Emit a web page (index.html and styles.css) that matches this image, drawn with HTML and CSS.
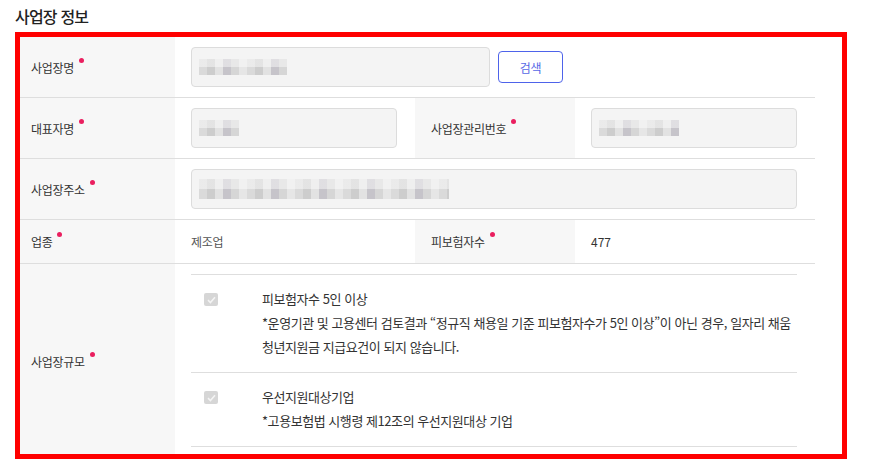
FILE: index.html
```html
<!DOCTYPE html>
<html lang="ko">
<head>
    <meta charset="UTF-8">
    <title>사업장 정보</title>
    <link rel="stylesheet" href="styles.css">
</head>
<body>
    <h2 class="section-title">사업장 정보</h2>

    <div class="highlight-box">
        <div class="info-table">
            <!-- 사업장명 -->
            <div class="cell label"><span class="required">사업장명</span></div>
            <div class="cell value span-3">
                <div class="field field-name"><span class="masked masked-name"></span></div>
                <button class="btn-search">검색</button>
            </div>

            <!-- 대표자명 / 사업장관리번호 -->
            <div class="cell label"><span class="required">대표자명</span></div>
            <div class="cell value">
                <div class="field"><span class="masked masked-rep"></span></div>
            </div>
            <div class="cell label label-inner"><span class="required">사업장관리번호</span></div>
            <div class="cell value">
                <div class="field"><span class="masked masked-no"></span></div>
            </div>

            <!-- 사업장주소 -->
            <div class="cell label"><span class="required">사업장주소</span></div>
            <div class="cell value span-3">
                <div class="field"><span class="masked masked-addr"></span></div>
            </div>

            <!-- 업종 / 피보험자수 -->
            <div class="cell label short"><span class="required">업종</span></div>
            <div class="cell value short"><span class="text-muted">제조업</span></div>
            <div class="cell label label-inner short"><span class="required">피보험자수</span></div>
            <div class="cell value short"><span class="text-plain">477</span></div>

            <!-- 사업장규모 -->
            <div class="cell label tall"><span class="required">사업장규모</span></div>
            <div class="cell value span-3 tall scale-cell">
                <div class="scale-list">
                    <div class="scale-item">
                        <span class="check-box">
                            <svg width="9" height="8" viewBox="0 0 9 8"><path d="M1 4.2 L3.4 6.5 L8 1.2" fill="none" stroke="#f4f4f4" stroke-width="1.6"/></svg>
                        </span>
                        <div class="scale-text">
                            <p class="scale-title">피보험자수 5인 이상</p>
                            <p class="scale-desc">*운영기관 및 고용센터 검토결과 “정규직 채용일 기준 피보험자수가 5인 이상”이 아닌 경우, 일자리 채움 청년지원금 지급요건이 되지 않습니다.</p>
                        </div>
                    </div>
                    <div class="scale-item">
                        <span class="check-box">
                            <svg width="9" height="8" viewBox="0 0 9 8"><path d="M1 4.2 L3.4 6.5 L8 1.2" fill="none" stroke="#f4f4f4" stroke-width="1.6"/></svg>
                        </span>
                        <div class="scale-text">
                            <p class="scale-title">우선지원대상기업</p>
                            <p class="scale-desc">*고용보험법 시행령 제12조의 우선지원대상 기업</p>
                        </div>
                    </div>
                </div>
            </div>
        </div>
    </div>
</body>
</html>
```

FILE: styles.css
```css
* {
    margin: 0;
    padding: 0;
    box-sizing: border-box;
}

body {
    font-family: "Noto Sans CJK KR", "Noto Sans", sans-serif;
    background: white;
    color: #333;
    font-size: 12px;
    padding-left: 15px;
}

.section-title {
    font-size: 16px;
    font-weight: 500;
    line-height: 32px;
    color: #222;
    letter-spacing: -0.8px;
}

.highlight-box {
    width: 832px;
    height: 427px;
    border: 5px solid #ff0000;
    overflow: hidden;
}

.info-table {
    display: grid;
    grid-template-columns: 155px 240px 160px 240px;
    width: 795px;
}

.cell {
    height: 61px;
    border-bottom: 1px solid #dedede;
    display: flex;
    align-items: center;
}

.cell.short {
    height: 44px;
}

.cell.tall {
    height: auto;
}

.span-3 {
    grid-column: span 3;
}

.label {
    background: #f7f7f7;
    padding-left: 11px;
}

.label-inner {
    padding-left: 16px;
}

.value {
    padding: 0 18px 0 16px;
}

.required {
    position: relative;
    letter-spacing: -0.3px;
}

.required::after {
    content: "";
    position: absolute;
    right: -10px;
    top: -1px;
    width: 5px;
    height: 5px;
    border-radius: 50%;
    background: #ea1f5f;
}

.field {
    flex: 1;
    height: 40px;
    background: #f4f4f4;
    border: 1px solid #dcdcdc;
    border-radius: 4px;
    display: flex;
    align-items: center;
    padding-left: 7px;
}

.field-name {
    flex: 0 0 299px;
}

.btn-search {
    margin-left: 8px;
    width: 65px;
    height: 32px;
    background: white;
    border: 1px solid #4e63ea;
    border-radius: 4px;
    color: #5668e6;
    font-family: inherit;
    font-size: 12px;
    letter-spacing: -0.3px;
}

.masked {
    display: block;
    height: 16px;
    background-image:
        linear-gradient(rgba(255,255,255,0.45) 50%, transparent 50%),
        repeating-linear-gradient(90deg, #dadada 0 8px, #cdcdcd 8px 16px, #e2e2e2 16px 24px, #c6c4ca 24px 32px, #d6d6d6 32px 40px, #e6e6e6 40px 48px);
}

.masked-name {
    width: 88px;
}

.masked-rep {
    width: 40px;
}

.masked-no {
    width: 80px;
}

.masked-addr {
    width: 250px;
    height: 20px;
}

.text-muted {
    color: #555;
    letter-spacing: -0.3px;
}

.text-plain {
    color: #333;
}

.scale-cell {
    display: block;
    padding-top: 10px;
    padding-bottom: 12px;
}

.scale-item {
    display: flex;
    border-top: 1px solid #dedede;
    padding: 12px 0 13px 13px;
}

.scale-item:last-child {
    border-bottom: 1px solid #dedede;
}

.check-box {
    flex: 0 0 14px;
    width: 14px;
    height: 13px;
    margin-top: 6px;
    margin-right: 44px;
    background: #d6d6d6;
    border-radius: 2px;
    display: flex;
    align-items: center;
    justify-content: center;
}

.scale-text {
    flex: 1;
    font-size: 13px;
    line-height: 24px;
    letter-spacing: -0.45px;
}
```
